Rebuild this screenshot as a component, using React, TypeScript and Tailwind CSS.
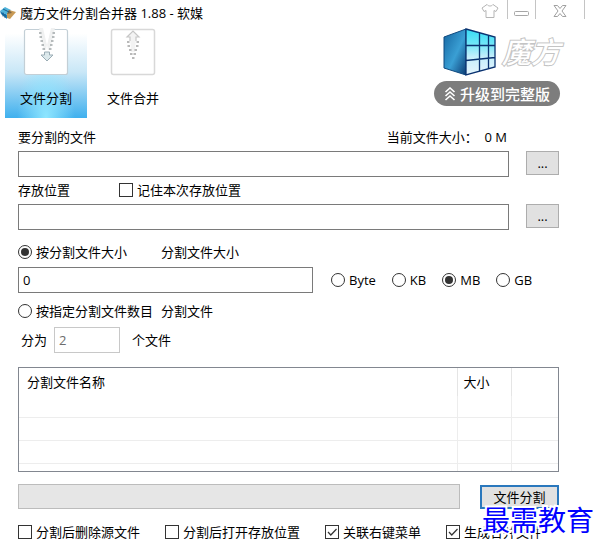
import type { InputHTMLAttributes, ReactNode } from "react";

const UNITS = ["Byte", "KB", "MB", "GB"];

const OPTIONS = [
  { label: "分割后删除源文件", checked: false },
  { label: "分割后打开存放位置", checked: false },
  { label: "关联右键菜单", checked: true },
  { label: "生成合并文件", checked: true },
];

function CubeLogo({ className }: { className?: string }) {
  return (
    <svg viewBox="0 0 54 50" className={className} aria-hidden="true">
      <defs>
        <linearGradient id="cube-left" x1="0" y1="0" x2="1" y2="1">
          <stop offset="0" stopColor="#1565a0" />
          <stop offset="0.55" stopColor="#3a9fd4" />
          <stop offset="1" stopColor="#0b3a72" />
        </linearGradient>
        <linearGradient id="cube-right" x1="0" y1="0" x2="0" y2="1">
          <stop offset="0" stopColor="#35dcf5" />
          <stop offset="0.3" stopColor="#6be6f8" />
          <stop offset="0.6" stopColor="#c4eefb" />
          <stop offset="1" stopColor="#e6f5fd" />
        </linearGradient>
      </defs>
      <path d="M2 10 24 2v46L2 41z" fill="url(#cube-left)" stroke="#0f4a80" strokeWidth="1" />
      <path d="M24 2 53 10v30L24 48z" fill="url(#cube-right)" />
      <path
        d="M24 2 53 10v30L24 48zM37.500 5.500v39M46.500 8v34M24 18.500h29M24 33.500l29-3"
        fill="none"
        stroke="#0a3270"
        strokeWidth="1.300"
      />
    </svg>
  );
}

function AppIcon() {
  return (
    <svg viewBox="0 0 16 14" className="h-3.5 w-4" aria-hidden="true">
      <path d="M0 5 5 1l6 3-4 5z" fill="#4fb4dc" />
      <path d="M0 5l7 4v4L1 8z" fill="#1c7fb8" />
      <path d="M9 4l7 2-6 7-3-1V8z" fill="#c89a55" />
      <path d="M9 4 7 8l5-1z" fill="#7a6648" />
      <path d="M3 3l6 3M3 6.500v4M5 8v4" stroke="#0d4a78" strokeWidth="0.8" fill="none" />
    </svg>
  );
}

function SplitIcon() {
  return (
    <svg viewBox="0 0 46 48" className="h-12 w-[46px]" aria-hidden="true">
      <rect x="1.500" y="1.500" width="43" height="45" rx="2" fill="#fff" stroke="#c3cfd6" strokeWidth="1.200" />
      <path d="M16 0h5l4 22h-4zM32 0h-5l-4 22h4z" fill="#f0f1f1" />
      <path d="M20 0h8l-4 17z" fill="#fff" />
      <path
        d="M16 5h2.500M16.500 9h2.500M17.500 13h2.500M18.500 17h2.500M19.500 21h2.500M29.500 5h2.500M29 9h2.500M28 13h2.500M27 17h2.500M26 21h2.500"
        stroke="#a0a6a8"
        strokeWidth="1.600"
      />
      <path d="M18 27h3.500v-3h5v3H30l-6 6z" fill="#dce9ec" stroke="#9aacb4" strokeWidth="1" />
    </svg>
  );
}

function MergeIcon() {
  return (
    <svg viewBox="0 0 46 48" className="h-12 w-[46px]" aria-hidden="true">
      <rect x="1.500" y="1.500" width="43" height="45" rx="2" fill="#fff" stroke="#d8d8d8" strokeWidth="1.500" />
      <path d="M17 9 23 3l6 6h-3l-1 15h-4L20 9z" fill="#f3f3f3" />
      <path d="M20 13V9h-3l6-6 6 6h-3v4" fill="none" stroke="#c6c6c6" strokeWidth="1.200" />
      <path
        d="M17 14h2.500M17.500 18h2.500M19 22h2.500M20 26h2.500M26.500 14h2.500M26 18h2.500M24.500 22h2.500M23.500 26h2.500M22 30h2.500"
        stroke="#a2a2a2"
        strokeWidth="1.600"
      />
    </svg>
  );
}

function TitleBar() {
  return (
    <header className="flex h-[26px] items-start justify-between">
      <div className="flex h-[26px] items-center gap-1">
        <AppIcon />
        <h1>魔方文件分割合并器 1.88 - 软媒</h1>
      </div>
      <div className="mr-[17px] flex h-[19px] items-stretch">
        <button type="button" aria-label="换肤" className="flex w-[34px] items-end justify-center">
          <svg viewBox="0 0 18 16" className="h-4 w-[18px]" fill="#fff" stroke="#b5b5b5">
            <path d="M6 1.500c1.500 2 4.500 2 6 0l5 3.500-2 3.500-2-1v7H5v-7l-2 1L1 5z" />
          </svg>
        </button>
        <button type="button" aria-label="最小化" className="flex w-7 items-end justify-center border-l border-[#c4c4c4] pb-0.5">
          <svg viewBox="0 0 16 6" className="h-1.5 w-4" fill="#fff" stroke="#a6a6a6">
            <rect x="0.500" y="0.500" width="14" height="4" rx="1" />
          </svg>
        </button>
        <button type="button" aria-label="关闭" className="flex w-[50px] items-end justify-center border-x border-[#c4c4c4] pb-0.5">
          <svg viewBox="0 0 14 12" className="h-3 w-3.5" fill="#fff" stroke="#a0a0a0">
            <path d="M1 .5h3.500L7 3.500 9.500.5H13L9 6l4 5.500H9.500L7 8.500l-2.500 3H1L5 6z" />
          </svg>
        </button>
      </div>
    </header>
  );
}

function Tab({ icon, label, active }: { icon: ReactNode; label: string; active?: boolean }) {
  return (
    <button
      type="button"
      aria-pressed={!!active}
      className={
        "flex w-[82px] flex-col items-center gap-3 pt-0.5 " +
        (active
          ? "bg-[radial-gradient(ellipse_at_bottom,#8fe6ff_0%,transparent_50%),linear-gradient(to_bottom,#ffffff_8%,#c9e7f7_50%,#3fb0ee_100%)]"
          : "")
      }
    >
      {icon}
      <span>{label}</span>
    </button>
  );
}

function Brand() {
  return (
    <div className="flex w-[126px] flex-col items-center gap-1 pt-px">
      <div className="flex w-full items-center justify-end gap-1.5">
        <CubeLogo className="h-[50px] w-[54px]" />
        <span className="text-[29px] leading-8 font-medium text-white italic [-webkit-text-stroke:2px_#c4c4c4] [paint-order:stroke_fill]">
          魔方
        </span>
      </div>
      <button
        type="button"
        className="flex h-[25px] w-full items-center justify-center gap-1 rounded-full bg-[#7d7d7d] text-[15px] font-medium text-white"
      >
        <svg viewBox="0 0 12 14" className="h-3.5 w-3" fill="none" stroke="currentColor" strokeWidth="1.600" aria-hidden="true">
          <path d="M1.500 5 6 1l4.500 4M1.500 9 6 5l4.500 4M1.500 13 6 9l4.500 4" />
        </svg>
        升级到完整版
      </button>
    </div>
  );
}

function Checkbox({ label, checked }: { label: string; checked?: boolean }) {
  return (
    <label className="flex items-center gap-1 whitespace-nowrap">
      <span className="grid size-3.5">
        <input
          type="checkbox"
          defaultChecked={checked}
          className="peer col-start-1 row-start-1 size-3.5 appearance-none border border-[#333333] bg-white"
        />
        <svg
          viewBox="0 0 14 14"
          className="pointer-events-none invisible col-start-1 row-start-1 size-3.5 peer-checked:visible"
          fill="none"
          stroke="#333333"
          strokeWidth="1.200"
        >
          <path d="m3 7 2.800 3L11.500 4" />
        </svg>
      </span>
      {label}
    </label>
  );
}

function Radio({ label, ...props }: { label: string } & InputHTMLAttributes<HTMLInputElement>) {
  return (
    <label className="flex items-center gap-1 whitespace-nowrap">
      <input
        type="radio"
        className="grid size-3.5 appearance-none place-items-center rounded-full border border-[#333333] bg-white before:size-2 before:rounded-full checked:before:bg-[#333333]"
        {...props}
      />
      {label}
    </label>
  );
}

function PathRow({ id, browseLabel }: { id: string; browseLabel: string }) {
  return (
    <div className="flex gap-[17px]">
      <input id={id} type="text" className="h-[26px] min-w-0 flex-1 border border-[#7a7a7a] px-1" />
      <button
        type="button"
        aria-label={browseLabel}
        className="h-6 w-[33px] border border-[#adadad] bg-[#e1e1e1] leading-5"
      >
        ...
      </button>
    </div>
  );
}

function FileTable() {
  return (
    <div className="mt-3.5 h-[105px] overflow-hidden border border-[#828790]">
      <table className="w-full table-fixed border-collapse text-left">
        <colgroup>
          <col />
          <col className="w-[54px]" />
          <col className="w-[47px]" />
        </colgroup>
        <thead>
          <tr className="h-7">
            <th className="border-r border-[#e5e5e5] px-2 font-normal">分割文件名称</th>
            <th className="border-r border-[#e5e5e5] px-1.5 font-normal">大小</th>
            <td />
          </tr>
        </thead>
        <tbody>
          {[0, 1, 2].map((row) => (
            <tr key={row} className="h-[23px] border-b border-[#ededed] first:h-[21px]">
              <td className="border-r border-[#ededed]" />
              <td className="border-r border-[#ededed]" />
              <td />
            </tr>
          ))}
          <tr className="h-2">
            <td className="border-r border-[#ededed]" />
            <td className="border-r border-[#ededed]" />
            <td />
          </tr>
        </tbody>
      </table>
    </div>
  );
}

export default function App() {
  return (
    <div className="relative bg-white pb-2.5 font-['Open_Sans','Noto_Sans_CJK_SC',sans-serif] text-[13px] leading-5 text-black">
      <TitleBar />
      <div className="flex justify-between pr-[42px] pl-[5px]">
        <nav className="flex h-[92px] gap-[5px]">
          <Tab icon={<SplitIcon />} label="文件分割" active />
          <Tab icon={<MergeIcon />} label="文件合并" />
        </nav>
        <Brand />
      </div>

      <main className="pr-[43px] pl-[18px]">
        <div className="mt-[9px] mb-1 flex justify-between">
          <label htmlFor="source">要分割的文件</label>
          <span className="mr-[52px] whitespace-pre">当前文件大小：  0 M</span>
        </div>
        <PathRow id="source" browseLabel="选择要分割的文件" />

        <div className="mt-[3px] mb-1 flex gap-[49px]">
          <label htmlFor="target">存放位置</label>
          <Checkbox label="记住本次存放位置" />
        </div>
        <PathRow id="target" browseLabel="选择存放位置" />

        <div className="mt-3 mb-[5px] flex">
          <div className="w-[143px]">
            <Radio name="mode" label="按分割文件大小" defaultChecked />
          </div>
          <label htmlFor="size">分割文件大小</label>
        </div>
        <div className="flex items-center gap-[18px]">
          <input
            id="size"
            type="text"
            defaultValue="0"
            className="h-[26px] min-w-0 flex-1 border border-[#7a7a7a] px-1"
          />
          <div className="flex w-[228px] gap-4">
            {UNITS.map((unit) => (
              <Radio key={unit} name="unit" label={unit} defaultChecked={unit === "MB"} />
            ))}
          </div>
        </div>

        <div className="mt-2 mb-1.5 flex">
          <div className="w-[143px]">
            <Radio name="mode" label="按指定分割文件数目" />
          </div>
          <span>分割文件</span>
        </div>
        <div className="flex items-center pl-[3px]">
          <label htmlFor="count">分为</label>
          <input
            id="count"
            type="text"
            defaultValue="2"
            disabled
            className="mr-3 ml-[7px] h-[26px] w-[66px] border border-[#c8c8c8] px-1 text-[#6d6d6d]"
          />
          <span>个文件</span>
        </div>

        <FileTable />

        <div className="mt-3 flex items-center gap-5">
          <div role="progressbar" aria-label="分割进度" aria-valuenow={0} className="h-[25px] flex-1 border border-[#bcbcbc] bg-[#e6e6e6]" />
          <button type="button" className="h-6 w-[79px] border-2 border-[#2a78bd] bg-[#e1e1e1] leading-5">
            文件分割
          </button>
        </div>

        <div className="mt-[13px] flex gap-[25px]">
          {OPTIONS.map((option) => (
            <Checkbox key={option.label} label={option.label} checked={option.checked} />
          ))}
        </div>
      </main>

      <div className="pointer-events-none absolute right-2 bottom-4 text-[28px] leading-8 text-[#0000ff] [-webkit-text-stroke:4px_white] [paint-order:stroke_fill]">
        最需教育
      </div>
    </div>
  );
}
